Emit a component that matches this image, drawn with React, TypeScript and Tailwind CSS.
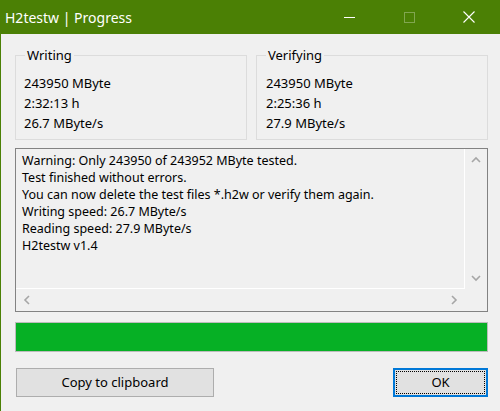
import React from "react";

const FONT = { fontFamily: '"Noto Sans", "Liberation Sans", sans-serif' };

const LOG_LINES = [
  "Warning: Only 243950 of 243952 MByte tested.",
  "Test finished without errors.",
  "You can now delete the test files *.h2w or verify them again.",
  "Writing speed: 26.7 MByte/s",
  "Reading speed: 27.9 MByte/s",
  "H2testw v1.4",
];

function Chevron({ dir }: { dir: "up" | "down" | "left" | "right" }) {
  const paths: Record<string, string> = {
    up: "M1 6 L5 2 L9 6",
    down: "M1 2 L5 6 L9 2",
    left: "M6 1 L2 5 L6 9",
    right: "M2 1 L6 5 L2 9",
  };
  const horiz = dir === "up" || dir === "down";
  return (
    <svg
      width={horiz ? 10 : 8}
      height={horiz ? 8 : 10}
      viewBox={horiz ? "0 0 10 8" : "0 0 8 10"}
      fill="none"
      stroke="#a6a6a6"
      strokeWidth="1.6"
    >
      <path d={paths[dir]} />
    </svg>
  );
}

function GroupBox({
  title,
  lines,
  className,
  valueIndent,
}: {
  title: string;
  lines: string[];
  className?: string;
  valueIndent?: string;
}) {
  return (
    <fieldset className={`border border-[#dcdcdc] px-[8px] pt-[10px] pb-[6px] ${className ?? ""}`}>
      <legend className="ml-[1px] px-[2px] leading-[16px] text-[13px] text-black">{title}</legend>
      {lines.map((l) => (
        <div key={l} className={`leading-[20px] text-[13px] text-black ${valueIndent ?? ""}`}>
          {l}
        </div>
      ))}
    </fieldset>
  );
}

export default function App() {
  return (
    <div
      className="flex h-[411px] w-[500px] flex-col overflow-hidden border-l border-[#4b8005] bg-[#f0f0f0]"
      style={FONT}
    >
      {/* Title bar */}
      <div className="flex h-[34px] flex-shrink-0 items-center bg-[#4b8005]">
        <span className="pl-[4px] text-[14px] text-white">H2testw | Progress</span>
        <div className="ml-auto mr-[1px] flex h-full">
          <div className="flex w-[60px] items-center justify-center">
            <div className="h-px w-[11px] bg-white" />
          </div>
          <div className="flex w-[60px] items-center justify-center">
            <div className="h-[11px] w-[11px] border border-white/30" />
          </div>
          <div className="flex w-[60px] items-center justify-center">
            <svg width="12" height="12" viewBox="0 0 12 12" stroke="white" strokeWidth="1.1">
              <path d="M0.5 0.5 L11.5 11.5 M11.5 0.5 L0.5 11.5" />
            </svg>
          </div>
        </div>
      </div>

      {/* Body */}
      <div className="flex flex-1 flex-col pl-[14px] pr-[12px] pt-[13px]">
        <div className="flex gap-[9px]">
          <GroupBox
            title="Writing"
            className="w-[232px]"
            lines={["243950 MByte", "2:32:13 h", "26.7 MByte/s"]}
          />
          <GroupBox
            title="Verifying"
            className="flex-1"
            valueIndent="ml-[1px]"
            lines={["243950 MByte", "2:25:36 h", "27.9 MByte/s"]}
          />
        </div>

        {/* Log memo */}
        <div className="mt-[8px] grid h-[164px] grid-cols-[1fr_22px] grid-rows-[1fr_22px] border border-[#828282]">
          <div className="border-b border-r border-white pl-[6px] pt-[3px] text-[12.5px] leading-[17px] text-black">
            {LOG_LINES.map((l) => (
              <div key={l} className="whitespace-nowrap">
                {l}
              </div>
            ))}
          </div>
          <div className="flex flex-col justify-between">
            <div className="flex h-[22px] items-center justify-center">
              <Chevron dir="up" />
            </div>
            <div className="flex h-[22px] items-center justify-center">
              <Chevron dir="down" />
            </div>
          </div>
          <div className="flex justify-between">
            <div className="flex w-[22px] items-center justify-center">
              <Chevron dir="left" />
            </div>
            <div className="flex w-[22px] items-center justify-center">
              <Chevron dir="right" />
            </div>
          </div>
          <div />
        </div>

        {/* Progress bar */}
        <div className="mt-[10px] h-[30px] border border-[#bcbcbc] bg-[#06b025]" />

        {/* Buttons */}
        <div className="mt-[16px] flex justify-between">
          <button
            type="button"
            className="ml-[1px] h-[29px] w-[198px] border border-[#adadad] bg-[#e1e1e1] text-[13px] text-black"
          >
            Copy to clipboard
          </button>
          <button
            type="button"
            className="flex h-[29px] w-[95px] items-stretch border-2 border-[#0078d7] bg-[#e1e1e1] p-[1px] text-[13px] text-black"
          >
            <span className="flex flex-1 items-center justify-center border border-dotted border-black">
              OK
            </span>
          </button>
        </div>
      </div>
    </div>
  );
}
